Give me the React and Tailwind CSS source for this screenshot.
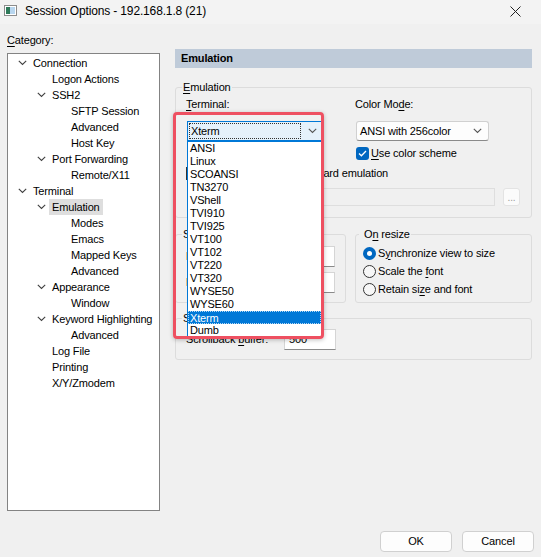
import React from 'react';

const font = "font-['Liberation_Sans',Arial,sans-serif] text-[11px] tracking-[-0.15px] text-black";

const tree = [
  { label: 'Connection', level: 0, open: true },
  { label: 'Logon Actions', level: 1 },
  { label: 'SSH2', level: 1, open: true },
  { label: 'SFTP Session', level: 2 },
  { label: 'Advanced', level: 2 },
  { label: 'Host Key', level: 2 },
  { label: 'Port Forwarding', level: 1, open: true },
  { label: 'Remote/X11', level: 2 },
  { label: 'Terminal', level: 0, open: true },
  { label: 'Emulation', level: 1, open: true, selected: true },
  { label: 'Modes', level: 2 },
  { label: 'Emacs', level: 2 },
  { label: 'Mapped Keys', level: 2 },
  { label: 'Advanced', level: 2 },
  { label: 'Appearance', level: 1, open: true },
  { label: 'Window', level: 2 },
  { label: 'Keyword Highlighting', level: 1, open: true },
  { label: 'Advanced', level: 2 },
  { label: 'Log File', level: 1 },
  { label: 'Printing', level: 1 },
  { label: 'X/Y/Zmodem', level: 1 },
];

const indent = ['pl-[9px]', 'pl-[28px]', 'pl-[47px]'];

const terminals = ['ANSI', 'Linux', 'SCOANSI', 'TN3270', 'VShell', 'TVI910', 'TVI925', 'VT100', 'VT102', 'VT220', 'VT320', 'WYSE50', 'WYSE60', 'Xterm', 'Dumb'];

const Chevron = ({ color = '#404040' }) => (
  <svg width="9" height="6" viewBox="0 0 9 6">
    <path d="M0.8 0.8 L4.5 4.5 L8.2 0.8" fill="none" stroke={color} strokeWidth="1.1" />
  </svg>
);

const Radio = ({ checked }) =>
  checked ? (
    <span className="w-[13px] h-[13px] rounded-full bg-[#0067c0] flex items-center justify-center">
      <span className="w-[5px] h-[5px] rounded-full bg-white" />
    </span>
  ) : (
    <span className="w-[13px] h-[13px] rounded-full border border-[#333] bg-[#f7f7f7]" />
  );

const Group = ({ title, className, children }) => (
  <fieldset className={'border border-[#dcdcdc] rounded-[3px] ' + className}>
    <legend className="-ml-[4px] px-[1px] h-[16px] leading-[16px]">{title}</legend>
    {children}
  </fieldset>
);

const Field = ({ value }) => (
  <div className="w-[52px] h-[21px] bg-white border border-[#d5d5d5] border-b-[#8a8a8a] flex items-center pl-[4px]">{value}</div>
);

export default function App() {
  return (
    <div className={font + ' w-[541px] h-[557px] bg-[#f0f0f0] overflow-hidden flex flex-col'}>
      {/* title bar */}
      <div className="h-[24px] bg-[#f3f3f3] flex items-start pt-[3px] pl-[4px] pr-[20px]">
        <svg width="13" height="11" viewBox="0 0 13 11" className="mt-[2px]">
          <rect x="0.5" y="0.5" width="12" height="10" fill="#ffffff" stroke="#8c8c8c" />
          <rect x="2" y="2" width="4" height="7" fill="#2f7a5a" />
          <rect x="6" y="2" width="5" height="7" fill="#b8d6ef" />
        </svg>
        <span className="ml-[8px] text-[12px] leading-[16px]">Session Options - 192.168.1.8 (21)</span>
        <svg width="11" height="11" viewBox="0 0 11 11" className="ml-auto mt-[3px]">
          <path d="M0.5 0.5 L10.5 10.5 M10.5 0.5 L0.5 10.5" stroke="#222" strokeWidth="1" />
        </svg>
      </div>

      <div className="flex pl-[7px]">
        {/* category tree */}
        <div className="flex flex-col pt-[9px]">
          <div className="h-[20px] leading-[14px]">
            <u className="underline-offset-2">C</u>ategory:
          </div>
          <div className="w-[153px] h-[458px] bg-white border border-[#838383] pt-[1px]">
            {tree.map((n, i) => (
              <div key={i} className={'h-[16px] flex items-center ' + indent[n.level]}>
                <span className="w-[16px] flex items-center justify-start pl-[1px]">
                  {n.open && <Chevron />}
                </span>
                <span className={n.selected ? '-ml-[3px] px-[3px] bg-[#dedede] leading-[16px]' : 'leading-[16px]'}>
                  {n.label}
                </span>
              </div>
            ))}
          </div>
        </div>

        {/* right page */}
        <div className="ml-[15px] w-[357px] pt-[25px] flex flex-col">
          <div className="h-[19px] bg-[#bfcbd9] pl-[6px] flex items-center font-bold">Emulation</div>

          <Group title={<span><u className="underline-offset-2">E</u>mulation</span>} className="mt-[11px] px-[10px] pt-[1px] pb-[11px]">
            <div className="flex">
              <div className="w-[169px] flex flex-col">
                <div className="h-[16px] leading-[16px]">
                  <u className="underline-offset-2">T</u>erminal:
                </div>
                <div className="relative mt-[9px] ml-[1px] w-[135px] h-[20px]">
                  <div className="w-full h-full bg-[#e5f1fb] border border-[#0078d7] flex items-center pl-[1px] pr-[4px]">
                    <span className="w-[112px] h-[16px] border border-dotted border-[#333] flex items-center pl-[1px]">Xterm</span>
                    <span className="ml-auto"><Chevron color="#555" /></span>
                  </div>
                  {/* open list */}
                  <div className="absolute left-0 top-[20px] w-[135px] bg-white border border-[#0078d7] z-10">
                    {terminals.map(t => (
                      <div
                        key={t}
                        className={
                          t === 'Xterm'
                            ? 'h-[13px] leading-[13px] pl-[1px] bg-[#0078d7] text-white border border-dotted border-[#b3d7f3]'
                            : 'h-[13px] leading-[13px] pl-[2px]'
                        }
                      >
                        {t}
                      </div>
                    ))}
                  </div>
                  {/* highlight frame */}
                  <div className="absolute -left-[14px] -top-[9px] w-[151px] h-[227px] border-[3px] border-[#ee5061] rounded-[4px] shadow-[0_1px_4px_rgba(0,0,0,0.25)] z-20 pointer-events-none" />
                </div>
                <div className="mt-[24px] h-[16px] flex items-center">
                  <span className="w-[13px] h-[13px] border border-[#333] bg-white" />
                  <span className="ml-[15px] whitespace-nowrap">Select an alternate keyboard emulation</span>
                </div>
              </div>
              <div className="flex flex-col">
                <div className="h-[16px] leading-[16px]">
                  Color Mo<u className="underline-offset-2">d</u>e:
                </div>
                <div className="mt-[9px] ml-[1px] w-[133px] h-[20px] bg-[#fdfdfd] border border-[#d0d0d0] border-b-[#8a8a8a] rounded-[3px] flex items-center pl-[3px] pr-[6px]">
                  <span>ANSI with 256color</span>
                  <span className="ml-auto"><Chevron color="#555" /></span>
                </div>
                <div className="mt-[5px] ml-[1px] h-[14px] flex items-center">
                  <span className="w-[13px] h-[13px] rounded-[3px] bg-[#0067c0] flex items-center justify-center">
                    <svg width="9" height="7" viewBox="0 0 9 7">
                      <path d="M1 3.5 L3.4 5.8 L8 1" fill="none" stroke="#fff" strokeWidth="1.3" />
                    </svg>
                  </span>
                  <span className="ml-[2px]">
                    <u className="underline-offset-2">U</u>se color scheme
                  </span>
                </div>
              </div>
            </div>
            <div className="mt-[7px] flex items-center pl-[17px]">
              <div className="w-[292px] h-[18px] border border-[#dedede] bg-[#f0f0f0]" />
              <div className="ml-[8px] w-[17px] h-[18px] bg-[#fbfbfb] border border-[#e3e3e3] rounded-[3px] flex items-end justify-center pb-[3px] text-[#9a9a9a] text-[10px] leading-[8px]">...</div>
            </div>
          </Group>

          <div className="mt-[8px] flex gap-[9px]">
            <Group title="Size" className="w-[171px] px-[10px] pt-[4px] pb-[8px]">
              <div className="h-[20px] flex items-center justify-between">
                <span>Logical rows:</span>
                <Field value="24" />
              </div>
              <div className="mt-[6px] h-[20px] flex items-center justify-between">
                <span>Logical columns:</span>
                <Field value="80" />
              </div>
            </Group>
            <Group
              title={<span className="pl-[4px]">O<u className="underline-offset-2">n</u> resize</span>}
              className="flex-1 px-[7px] pt-[2px] pb-[4px]"
            >
              <div className="h-[18px] flex items-center gap-[2px]">
                <Radio checked />
                <span>S<u className="underline-offset-2">y</u>nchronize view to size</span>
              </div>
              <div className="h-[18px] flex items-center gap-[2px]">
                <Radio />
                <span>Scale the <u className="underline-offset-2">f</u>ont</span>
              </div>
              <div className="h-[18px] flex items-center gap-[2px]">
                <Radio />
                <span>Retain si<u className="underline-offset-2">z</u>e and font</span>
              </div>
            </Group>
          </div>

          <Group title="Scrollback" className="mt-[7px] px-[10px] pt-[3px] pb-[9px]">
            <div className="flex items-center">
              <span className="w-[98px]">Scrollback <u className="underline-offset-2">b</u>uffer:</span>
              <Field value="500" />
            </div>
          </Group>
        </div>
      </div>

      <div className="mt-[20px] flex justify-end gap-[10px] pr-[7px]">
        <button className="w-[72px] h-[21px] bg-[#fdfdfd] border border-[#d0d0d0] rounded-[4px]">OK</button>
        <button className="w-[72px] h-[21px] bg-[#fdfdfd] border border-[#d0d0d0] rounded-[4px]">Cancel</button>
      </div>
    </div>
  );
}
